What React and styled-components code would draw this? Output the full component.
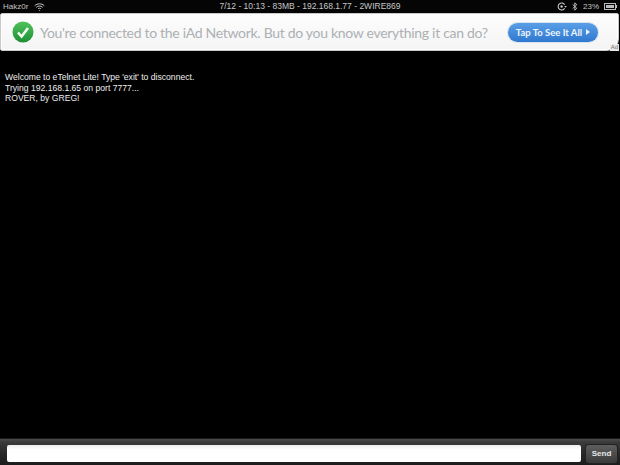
import React from "react";
import styled, { createGlobalStyle } from "styled-components";

const Global = createGlobalStyle`
  html, body { margin: 0; padding: 0; background: #000; }
  body { font-family: "Liberation Sans", Arial, sans-serif; }
`;
const Page = styled.div`
  width: 620px; height: 465px; display: flex; flex-direction: column; background: #000; overflow: hidden;
`;
const StatusBar = styled.div`
  height: 13px; flex: none; display: grid; grid-template-columns: 1fr auto 1fr; align-items: center;
  padding: 0 3px; color: #c4c4c4; font-size: 8px; line-height: 11px; background: #050505;
`;
const StatusSide = styled.div`
  display: flex; align-items: center; gap: ${p => p.$gap || 5}px; justify-content: ${p => p.$end ? "flex-end" : "flex-start"};
`;
const StatusCenter = styled.div`
  font-size: 8.5px; color: #c8c8c8;
`;
const AdBanner = styled.div`
  position: relative; height: 38px; flex: none; box-sizing: border-box; display: flex; align-items: center;
  background: linear-gradient(#fdfdfd, #f4f4f4); border: 1px solid #c9c9c9;
  border-radius: 2px 2px 12px 2px; padding: 0 20px 0 11px; margin-right: 1px; box-shadow: inset 0 0 0 1px #fff;
`;
const Check = styled.svg`width: 22px; height: 22px; flex: none;`;
const AdText = styled.div`
  margin-left: 6px; flex: 1; min-width: 0; color: #acb0b3; font-family: "Lato", sans-serif; font-size: 14px; letter-spacing: -0.3px; white-space: nowrap;
`;
const TapButton = styled.div`
  width: 90px; height: 19px; flex: none; box-sizing: border-box; display: flex; align-items: center; justify-content: center; gap: 4px;
  border-radius: 10px; background: linear-gradient(#5a9ee6, #2f78cf); color: #eef5fc;
  font-family: "Lato", sans-serif; font-size: 9.5px; font-weight: 700; white-space: nowrap; box-shadow: 0 0 0 1px #d6e2ee;
`;
const AdTag = styled.span`
  position: absolute; right: -1px; bottom: -1px; font-size: 6px; line-height: 7px; color: #777; background: #e8e8e8; padding: 0 1px; border-radius: 2px 0 0 0;
`;
const Terminal = styled.div`
  flex: 1; background: #000; color: #efefef; font-size: 8.6px; line-height: 10.7px; padding: 21px 5px 0; white-space: pre;
`;
const InputBar = styled.div`
  height: 27px; flex: none; box-sizing: border-box; display: flex; align-items: center; gap: 5px; padding: 3px 3px 0 7px;
  background: linear-gradient(#4c4c4c, #3a3a3a 12%, #262626 60%, #1c1c1c); border-top: 1px solid #1a1a1a;
`;
const Field = styled.div`
  width: 574px; height: 17px; flex: none; background: linear-gradient(#eee, #fff 30%); border-radius: 2px;
`;
const Send = styled.div`
  flex: 1; height: 18px; display: flex; align-items: center; justify-content: center; font-size: 8px; font-weight: 700; color: #e8e8e8;
  border-radius: 3px; background: linear-gradient(#5e5e5e, #3a3a3a); box-shadow: 0 0 0 1px #222;
`;
const Glyph = styled.svg`display: block; flex: none;`;

export default function App() {
  return (
    <Page>
      <Global />
      <StatusBar>
        <StatusSide $gap={6}>
          <span>Hakz0r</span>
          <Glyph width="11" height="8" viewBox="0 0 11 8" fill="none" stroke="#c8c8c8" strokeWidth="1">
            <path d="M.7 2.7C3.5.2 7.5.2 10.3 2.7M2.3 4.3c2-1.7 4.4-1.7 6.4 0M4 5.8c1-.8 2-.8 3 0" />
            <path d="M5.5 7.9 4.7 7h1.6z" fill="#c8c8c8" stroke="none" />
          </Glyph>
        </StatusSide>
        <StatusCenter>7/12 - 10:13 - 83MB - 192.168.1.77 - 2WIRE869</StatusCenter>
        <StatusSide $end $gap={5}>
          <Glyph width="10" height="9" viewBox="0 0 10 9" fill="none" stroke="#c8c8c8" strokeWidth="1.1">
            <path d="M7.6 6.4A3.5 3.5 0 1 1 7.6 2.6" />
            <circle cx="4.6" cy="4.5" r="1.2" fill="#c8c8c8" stroke="none" />
            <path d="M7.2 4h2.6L8.5 5.8z" fill="#c8c8c8" stroke="none" />
          </Glyph>
          <Glyph width="6" height="9" viewBox="0 0 6 9" fill="none" stroke="#c8c8c8" strokeWidth=".9">
            <path d="M.6 2.4 4.8 6.3 2.8 8.2V.8l2 1.9L.6 6.6" />
          </Glyph>
          <span>23%</span>
          <Glyph width="13" height="7" viewBox="0 0 13 7">
            <rect x=".5" y=".5" width="11" height="6" fill="none" stroke="#bbb" />
            <rect x="2" y="2" width="8" height="3" fill="#bbb" />
            <rect x="12" y="2" width="1" height="3" fill="#bbb" />
          </Glyph>
        </StatusSide>
      </StatusBar>
      <AdBanner>
        <Check viewBox="0 0 22 22">
          <defs>
            <linearGradient id="g" x1="0" y1="0" x2="0" y2="1">
              <stop offset="0" stopColor="#4fc35a" />
              <stop offset="1" stopColor="#1f8f35" />
            </linearGradient>
          </defs>
          <circle cx="11" cy="11" r="10.5" fill="url(#g)" />
          <path d="M6 11.5l3.6 4L16 7" fill="none" stroke="#f4fff4" strokeWidth="2.6" />
        </Check>
        <AdText>You're connected to the iAd Network. But do you know everything it can do?</AdText>
        <TapButton>
          <span>Tap To See It All</span>
          <Glyph width="4" height="6" viewBox="0 0 4 6"><path d="M0 0l4 3-4 3z" fill="#eef5fc" /></Glyph>
        </TapButton>
        <AdTag>Ad</AdTag>
      </AdBanner>
      <Terminal>{"Welcome to eTelnet Lite! Type 'exit' to disconnect.\nTrying 192.168.1.65 on port 7777...\nROVER, by GREG!"}</Terminal>
      <InputBar>
        <Field />
        <Send>Send</Send>
      </InputBar>
    </Page>
  );
}
